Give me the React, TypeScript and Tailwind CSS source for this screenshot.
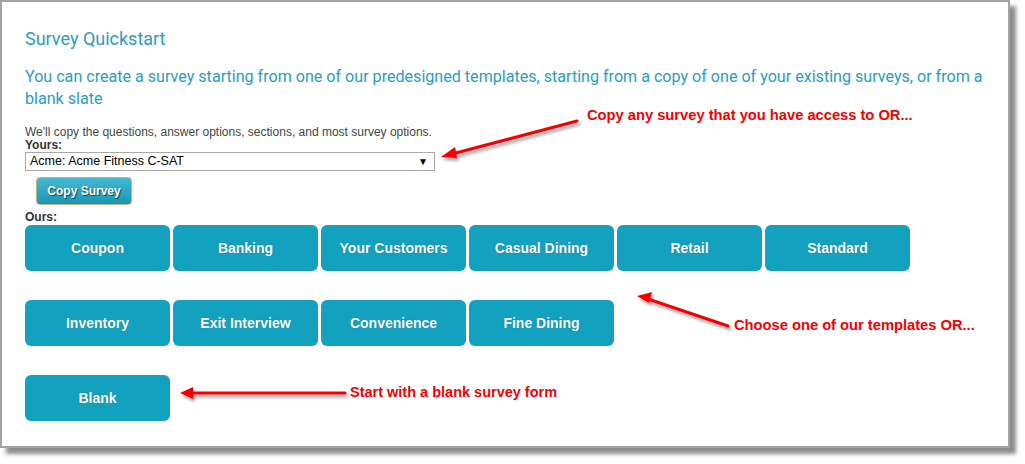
import React from "react";

const row1 = ["Coupon", "Banking", "Your Customers", "Casual Dining", "Retail", "Standard"];
const row2 = ["Inventory", "Exit Interview", "Convenience", "Fine Dining"];

function TBtn({ label }: { label: string }) {
  return (
    <button className="w-[145px] h-[46px] rounded-[6px] bg-[#12a1bf] text-white text-[14px] font-bold font-['Liberation_Sans',Arial,sans-serif] [text-shadow:0_0_1px_rgba(0,0,0,0.3)]">
      {label}
    </button>
  );
}

export default function App() {
  return (
    <div className="relative w-[1025px] h-[464px] bg-white overflow-hidden">
      <div className="w-[1010px] h-[448px] border-2 border-[#a3a3a3] bg-white shadow-[6px_6px_4px_rgba(0,0,0,0.45)] pl-[23px] pt-[25px]">
        <h1 className="font-['Roboto',sans-serif] text-[18px] leading-[24px] text-[#2b9cc3]">Survey Quickstart</h1>
        <p className="mt-[15px] font-['Roboto',sans-serif] text-[16.1px] leading-[22px] text-[#2b9cc3] pr-[4px]">
          You can create a survey starting from one of our predesigned templates, starting from a copy of one of your existing surveys, or from a blank slate
        </p>
        <div className="mt-[16px] font-['Liberation_Sans',Arial,sans-serif] text-[12px] leading-[13px] text-[#444]">
          We'll copy the questions, answer options, sections, and most survey options.
        </div>
        <div className="font-['Liberation_Sans',Arial,sans-serif] text-[12px] leading-[13px] font-bold text-[#333]">Yours:</div>
        <div className="w-[410px] h-[19px] border border-[#a9a9a9] flex items-center justify-between pl-[4px] pr-[6px] font-['Liberation_Sans',Arial,sans-serif] text-[12.5px] text-black">
          <span>Acme: Acme Fitness C-SAT</span>
          <span className="text-[10px]">▼</span>
        </div>
        <button className="mt-[6px] ml-[11px] w-[96px] h-[28px] rounded-[4px] border border-[#c9b27a] bg-gradient-to-b from-[#44b9d3] to-[#1597b5] text-white font-bold text-[12px] font-['Liberation_Sans',Arial,sans-serif] [text-shadow:1px_1px_1px_rgba(0,0,0,0.6)]">
          Copy Survey
        </button>
        <div className="mt-[6px] font-['Liberation_Sans',Arial,sans-serif] text-[12px] leading-[13px] font-bold text-[#333]">Ours:</div>
        <div className="mt-[1px] flex flex-col gap-[29px]">
          <div className="flex gap-[3px]">{row1.map((l) => <TBtn key={l} label={l} />)}</div>
          <div className="flex gap-[3px]">{row2.map((l) => <TBtn key={l} label={l} />)}</div>
          <div className="flex gap-[3px]"><TBtn label="Blank" /></div>
        </div>
      </div>

      <svg className="absolute left-0 top-0" width="1025" height="464" viewBox="0 0 1025 464">
        <defs>
          <filter id="sh" x="-20%" y="-50%" width="140%" height="200%">
            <feDropShadow dx="2" dy="3" stdDeviation="1.5" floodColor="#000" floodOpacity="0.35" />
          </filter>
        </defs>
        <g filter="url(#sh)" fill="#f50000" stroke="#f50000" strokeLinecap="round">
          <line x1="577" y1="121" x2="452" y2="154" strokeWidth="3" />
          <polygon points="441,157 455,147 457,158" stroke="none" />
          <line x1="728" y1="326" x2="648" y2="299" strokeWidth="3" />
          <polygon points="637,296 652,292 649,303" stroke="none" />
          <line x1="345" y1="393" x2="192" y2="393" strokeWidth="3" />
          <polygon points="180,393 193,387 193,399" stroke="none" />
        </g>
      </svg>

      <div className="absolute left-[587px] top-[107px] font-['Liberation_Sans',Arial,sans-serif] font-bold text-[14.7px] leading-[16px] text-[#f50000]">
        Copy any survey that you have access to OR...
      </div>
      <div className="absolute left-[734px] top-[317px] font-['Liberation_Sans',Arial,sans-serif] font-bold text-[14.7px] leading-[16px] text-[#f50000]">
        Choose one of our templates OR...
      </div>
      <div className="absolute left-[350px] top-[384px] font-['Liberation_Sans',Arial,sans-serif] font-bold text-[14.5px] leading-[16px] text-[#f50000]">
        Start with a blank survey form
      </div>
    </div>
  );
}
